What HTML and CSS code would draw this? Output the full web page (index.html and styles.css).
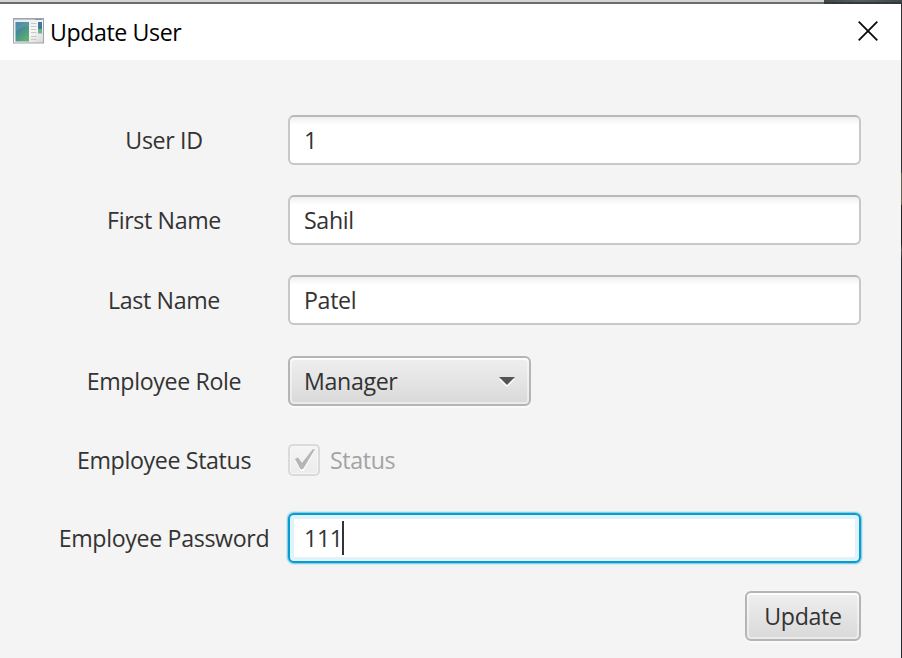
FILE: index.html
```html
<!DOCTYPE html>
<html lang="en">
<head>
<meta charset="utf-8">
<title>Update User</title>
<link rel="stylesheet" href="styles.css">
</head>
<body>
<div class="backdrop-top"></div>
<main class="window">
  <header class="titlebar">
    <svg class="app-icon" width="32" height="27" viewBox="0 0 32 27">
      <defs>
        <linearGradient id="pane" x1="0" y1="0" x2="0.7" y2="1"><stop offset="0" stop-color="#3f78ad"/><stop offset="0.5" stop-color="#468f91"/><stop offset="1" stop-color="#62b070"/></linearGradient>
        <linearGradient id="frame" x1="0" y1="0" x2="1" y2="1"><stop offset="0" stop-color="#e4e8eb"/><stop offset="0.6" stop-color="#f6f6f6"/><stop offset="1" stop-color="#d4d4d4"/></linearGradient>
      </defs>
      <rect x="0.5" y="0.5" width="30" height="24.500" fill="url(#frame)" stroke="#a0a4aa"/>
      <path d="M1 1.500h29" stroke="#bcc5d0"/>
      <path d="M22 1.500h7" stroke="#8096b8"/>
      <rect x="2.500" y="4" width="13.500" height="19.500" fill="url(#pane)"/>
      <path d="M2.500 13Q8 9 16 8V4H2.500z" fill="#ffffff" opacity="0.1"/>
      <path d="M18 5.500h5.500M18 8.500h5.500M18 11.500h5.500M18 14.500h5.500M18 18.500h5.500M18 21.500h5.500" stroke="#c9c9cb"/>
      <rect x="25" y="4" width="4" height="7" fill="#41779f"/>
      <rect x="25" y="11" width="4" height="4.500" fill="#6bb583"/>
    </svg>
    <h1 class="title">Update User</h1>
    <svg class="close" width="20" height="20" viewBox="0 0 20 20"><path d="M0.700 0.700l18.600 18.600M19.300 0.700L0.700 19.300" stroke="#0b0b0b" stroke-width="1.800" fill="none"/></svg>
  </header>
  <form class="form">
    <span class="label">User ID</span><div class="field">1</div>
    <span class="label">First Name</span><div class="field">Sahil</div>
    <span class="label">Last Name</span><div class="field">Patel</div>
    <span class="label low">Employee Role</span>
    <div class="button combo"><span>Manager</span>
      <svg class="arrow" width="16" height="10" viewBox="0 0 16 10"><path d="M0 2h16L8 10z" fill="#fff"/><path d="M0 0h16L8 8z" fill="#545454"/></svg>
    </div>
    <span class="label low">Employee Status</span>
    <div class="check low"><span class="box"><svg width="22" height="24" viewBox="0 0 22 24"><path d="M1 14L4 12.500 8 18 20.500 4 9.500 24H6.800z" fill="#fff"/><path d="M1 12L4 10.500 8 16 18.500 2.500 21 2 9.500 21.500 7.500 22.500 6 21.500z" fill="#b5b5b5"/></svg></span><span>Status</span></div>
    <span class="label">Employee Password</span><div class="field focused"><span>111</span><i class="caret"></i></div>
    <div class="actions"><div class="button update">Update</div></div>
  </form>
</main>
<div class="backdrop-side"></div>
</body>
</html>
```
FILE: styles.css
```css
* { box-sizing: border-box; }
body {
  margin: 0;
  width: 902px;
  height: 658px;
  overflow: hidden;
  display: grid;
  grid-template: 4px 654px / 901px 1px;
  background: #f4f4f4;
  color: #333;
  font: 23.2px/32px "Open Sans", "Noto Sans", sans-serif;
  letter-spacing: -0.35px;
}
.backdrop-top {
  grid-column: 1 / 3;
  background:
    linear-gradient(90deg, #6d6d6f 824px, #35383b 824px) 0 2px / 100% 2px no-repeat,
    linear-gradient(90deg, #d5d5d5 824px, #3e484b 824px, #555f61 860px, #3e474a);
}
.backdrop-side { background: linear-gradient(#333 0 168px, #66634b 170px 200px, #222 202px 240px, #565150 246px, #25282b 255px); }
.titlebar {
  display: flex;
  align-items: center;
  height: 56px;
  padding: 0 23px 0 13px;
  background: #fff;
  color: #000;
}
.app-icon { margin: -1px 5px 0 0; }
.title { margin: 0; font-size: 23.2px; font-weight: 400; letter-spacing: -0.42px; }
.close { margin: -2px 0 0 auto; }
.form {
  display: grid;
  grid-template-columns: 210px 573px;
  grid-template-rows: 50px 50px 50px 50px 48px 50px 46px;
  column-gap: 19px;
  padding: 55px 0 0 59px;
  row-gap: 30px;
  align-items: center;
}
.label { justify-self: center; white-space: nowrap; }
.low { margin-top: 2px; }
.field {
  display: flex;
  align-items: center;
  height: 50px;
  padding: 0 14px;
  border: 2px solid #c8c8c8;
  border-top-color: #b9b9b9;
  border-radius: 6px;
  background: linear-gradient(#efefef, #fff 8px);
}
.button {
  display: flex;
  align-items: center;
  height: 50px;
  border: 2px solid #b5b5b5;
  border-radius: 6px;
  background: linear-gradient(#efefef, #d9d9d9);
  box-shadow: inset 0 0 0 2px rgba(255, 255, 255, 0.45), inset 0 2px 0 #fcfcfc, 0 2px 0 #fafafa;
}
.combo {
  margin: 1px 0 -1px;
  width: 243px;
  padding: 0 14px;
  justify-content: space-between;
}
.arrow { margin-top: 2px; }
.check { display: flex; align-items: center; gap: 10px; color: #a3a3a3; }
.box {
  width: 32px;
  height: 32px;
  border: 2px solid #dadada;
  border-radius: 5px;
  background: linear-gradient(#f4f4f4, #ececec);
  box-shadow: inset 0 0 0 1px #f7f7f7;
  padding: 1px 0 0 4px;
  line-height: 0;
}
.focused {
  border: 2px solid #039ed3;
  background: #fff;
  box-shadow: inset 0 0 0 4px #e1f3f9, 0 0 0 1px #8fcce0, 0 0 0 2px #d5e9ef;
}
.caret { width: 2px; height: 34px; margin-left: -1px; background: #333; }
.actions { height: 50px; grid-column: 1 / 3; display: flex; justify-content: flex-end; }
.update { width: 116px; justify-content: center; }
```
